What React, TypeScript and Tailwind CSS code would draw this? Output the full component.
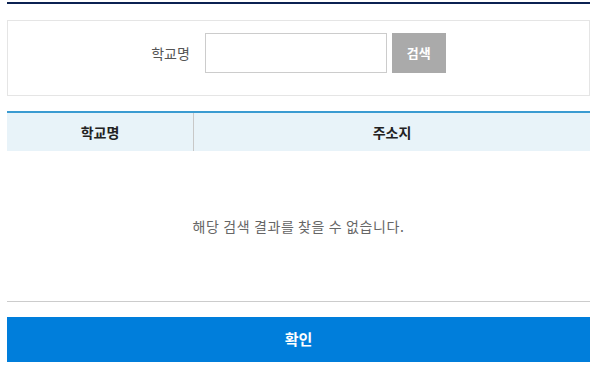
export default function App() {
  return (
    <div className="w-[597px] h-[367px] bg-white pl-[7px] pr-[7px] pt-[2px] font-['Noto_Sans_CJK_KR','Noto_Sans',sans-serif]">
      <div className="h-[2px] bg-[#0b2152]" />

      <div className="mt-[16px] h-[76px] border border-[#e5e5e5] flex items-start justify-center pt-[12px]">
        <span className="h-[40px] flex items-center text-[14px] text-[#555] mr-[15px]">학교명</span>
        <input
          type="text"
          className="w-[182px] h-[40px] border border-[#ccc] outline-none px-2 text-[14px]"
        />
        <button className="ml-[5px] w-[54px] h-[40px] bg-[#aaaaaa] text-white text-[13px] font-bold">
          검색
        </button>
      </div>

      <div className="mt-[15px] border-t-2 border-[#3a9bd1]">
        <div className="flex h-[38px] bg-[#e8f3f9] text-[14px] font-bold text-[#222]">
          <div className="w-[187px] flex items-center justify-center border-r border-[#c8c8c8]">
            학교명
          </div>
          <div className="flex-1 flex items-center justify-center">주소지</div>
        </div>
        <div className="h-[151px] border-b border-[#ccc] flex items-center justify-center text-[14px] tracking-[0.6px] text-[#666]">
          해당 검색 결과를 찾을 수 없습니다.
        </div>
      </div>

      <button className="mt-[15px] w-full h-[45px] bg-[#007edb] text-white text-[15px] font-bold">
        확인
      </button>
    </div>
  );
}
